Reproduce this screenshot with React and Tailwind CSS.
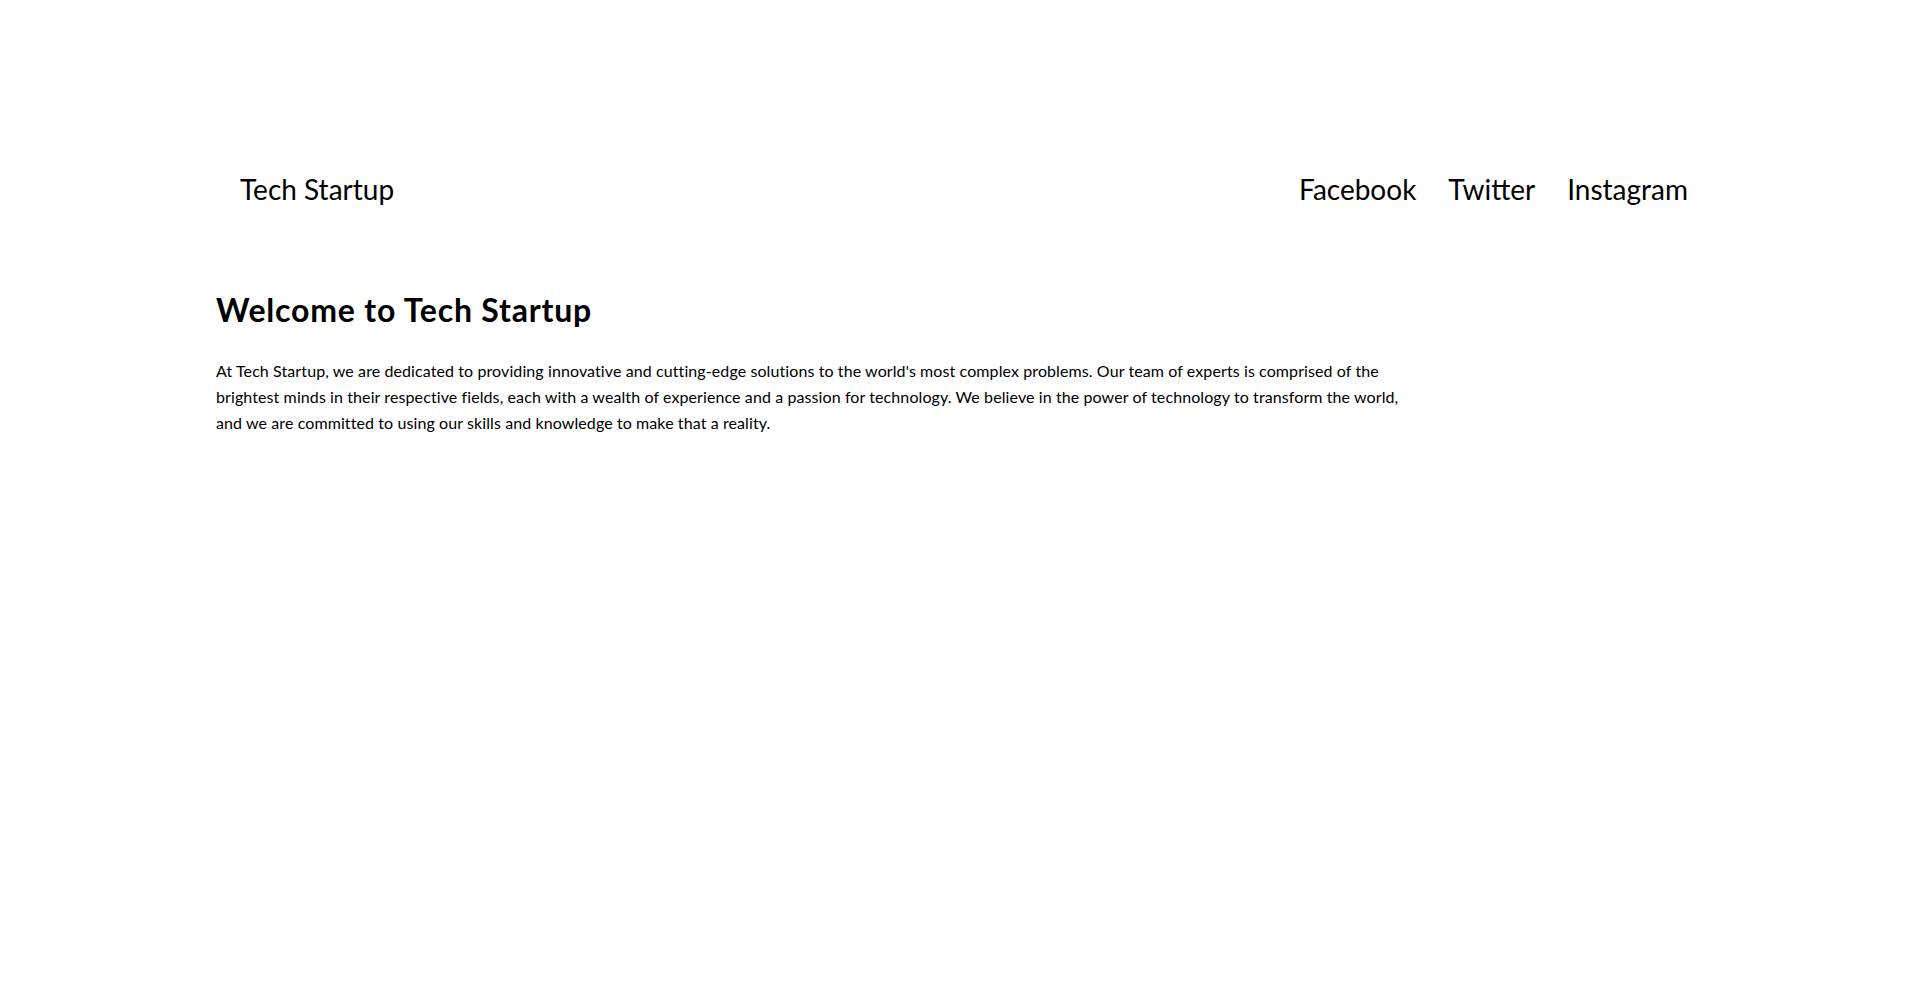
export default function App() {
  return (
    <div className="min-h-screen bg-white text-black">
      <div className="mx-auto max-w-screen-2xl px-6 font-['Lato','Liberation_Sans',sans-serif]">
        {/* HEADER */}
        <header className="flex items-center justify-between pl-6 pr-4 pt-[171px]">
          <a href="#" className="text-[28px] leading-[36px]">
            Tech Startup
          </a>
          <nav className="flex items-center gap-8 text-[28px] leading-[36px]">
            <a href="#">Facebook</a>
            <a href="#">Twitter</a>
            <a href="#">Instagram</a>
          </nav>
        </header>

        {/* MAIN */}
        <main className="mt-[83px]">
          <h1 className="text-[32px] font-bold leading-[40px] tracking-[0.025em]">Welcome to Tech Startup</h1>
          <p className="mt-[28px] max-w-[1190px] text-base leading-[26px] tracking-[0.006em]">
            At Tech Startup, we are dedicated to providing innovative and cutting-edge solutions to the
            world's most complex problems. Our team of experts is comprised of the brightest minds in their
            respective fields, each with a wealth of experience and a passion for technology. We believe in
            the power of technology to transform the world, and we are committed to using our skills and
            knowledge to make that a reality.
          </p>
        </main>
      </div>
    </div>
  );
}
